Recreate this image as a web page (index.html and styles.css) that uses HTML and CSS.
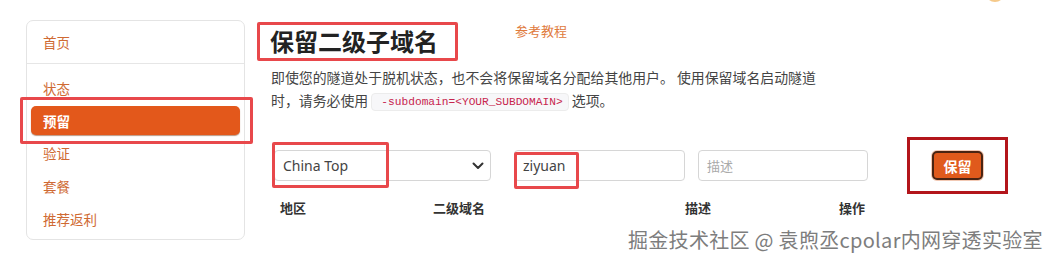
FILE: index.html
```html
<!DOCTYPE html>
<html lang="zh-CN">
<head>
<meta charset="utf-8">
<title>预留</title>
<link rel="stylesheet" href="styles.css">
</head>
<body>
<div class="page">
  <nav class="sidebar">
    <a class="nav-item home">首页</a>
    <div class="nav-list">
      <a class="nav-item">状态</a>
      <a class="nav-item active">预留</a>
      <a class="nav-item">验证</a>
      <a class="nav-item">套餐</a>
      <a class="nav-item">推荐返利</a>
    </div>
  </nav>
  <main class="main">
    <div class="title-row">
      <h1 class="title">保留二级子域名</h1>
      <a class="tutorial">参考教程</a>
    </div>
    <p class="desc">即使您的隧道处于脱机状态，也不会将保留域名分配给其他用户。 使用保留域名启动隧道<br>时，请务必使用 <code class="code">-subdomain=&lt;YOUR_SUBDOMAIN&gt;</code> 选项。</p>
    <div class="form-row">
      <div class="select">
        <span>China Top</span>
        <svg class="chev" width="12" height="8" viewBox="0 0 12 8"><path d="M1.5 1.5 L6 6 L10.5 1.5" fill="none" stroke="#333" stroke-width="2" stroke-linecap="round" stroke-linejoin="round"/></svg>
      </div>
      <div class="input">ziyuan</div>
      <div class="input desc-input placeholder">描述</div>
      <button class="btn">保留</button>
    </div>
    <div class="head-row">
      <span class="h h1">地区</span>
      <span class="h h2">二级域名</span>
      <span class="h h3">描述</span>
      <span class="h h4">操作</span>
    </div>
  </main>
</div>
<div class="mark mark-side"></div>
<div class="mark mark-title"></div>
<div class="mark mark-select"></div>
<div class="mark mark-input"></div>
<div class="mark mark-btn"></div>
<div class="blob"></div>
<div class="watermark">掘金技术社区 @ 袁煦丞cpolar内网穿透实验室</div>
</body>
</html>
```

FILE: styles.css
```css
html, body {
  margin: 0;
  padding: 0;
  background: #fff;
  width: 1050px;
  height: 266px;
  overflow: hidden;
  font-family: "Noto Sans", "Noto Sans CJK SC", sans-serif;
  position: relative;
}

.page {
  display: flex;
  align-items: flex-start;
}

.sidebar {
  margin: 20px 0 0 26px;
  width: 217px;
  height: 218px;
  border: 1px solid #e4e4e4;
  border-radius: 7px;
  display: flex;
  flex-direction: column;
  box-sizing: content-box;
}

.nav-item {
  display: flex;
  align-items: center;
  font-size: 13.5px;
  color: #cf6a33;
  padding-left: 16px;
  height: 33px;
  font-family: "Noto Sans CJK SC", sans-serif;
}

.home {
  height: 42px;
  border-bottom: 1px solid #e6e6e6;
}

.nav-list {
  display: flex;
  flex-direction: column;
  padding-top: 7px;
}

.nav-item.active {
  background: #e3581b;
  color: #fff;
  font-weight: 700;
  margin: 2px 4px 1px 4px;
  height: 29px;
  padding-left: 12px;
  border-radius: 5px;
  box-shadow: 0 1px 1px rgba(120, 50, 10, 0.5);
}

.main {
  margin-left: 25px;
  display: flex;
  flex-direction: column;
}

.title-row {
  display: flex;
  align-items: flex-start;
  padding-top: 23px;
}

.title {
  margin: 5px 0 0 0;
  font-size: 24px;
  line-height: 26px;
  font-weight: 700;
  color: #222;
  font-family: "Noto Sans CJK SC", sans-serif;
}

.tutorial {
  margin-left: 77px;
  font-size: 13px;
  line-height: 16px;
  color: #e07a3c;
  font-family: "Noto Sans CJK SC", sans-serif;
}

.desc {
  margin: 12px 0 0 1px;
  font-size: 13.9px;
  line-height: 23px;
  color: #444;
  font-family: "Noto Sans CJK SC", sans-serif;
}

.code {
  display: inline-block;
  font-family: "Liberation Mono", monospace;
  font-size: 11.2px;
  line-height: 16px;
  color: #c7254e;
  background: #f7f7f9;
  border: 1px solid #ececec;
  border-radius: 4px;
  padding: 0 5px 0 9px;
  vertical-align: 1px;
}

.form-row {
  display: flex;
  align-items: center;
  margin-top: 38px;
  margin-left: 4px;
}

.select, .input {
  box-sizing: border-box;
  height: 31px;
  border: 1px solid #d6d6d6;
  border-radius: 4px;
  display: flex;
  align-items: center;
  font-size: 14px;
  color: #444;
  background: #fff;
}

.select {
  width: 217px;
  padding: 0 6px 0 8px;
  justify-content: space-between;
}

.input {
  width: 171px;
  margin-left: 23px;
  padding-left: 8px;
}

.desc-input {
  margin-left: 13px;
  width: 170px;
}

.placeholder {
  color: #aaa;
  font-size: 13px;
  font-family: "Noto Sans CJK SC", sans-serif;
}

.btn {
  margin-left: 64px;
  width: 51px;
  height: 29px;
  background: #e05a1c;
  color: #fff;
  font-weight: 700;
  font-size: 14px;
  border: 2px solid #4a2412;
  border-radius: 5px;
  box-shadow: 0 0 0 1px #f2c9b4;
  font-family: "Noto Sans CJK SC", sans-serif;
  padding: 0;
}

.head-row {
  display: flex;
  margin-top: 18px;
  font-size: 13px;
  line-height: 18px;
  font-weight: 700;
  color: #333;
  font-family: "Noto Sans CJK SC", sans-serif;
}

.h1 { margin-left: 10px; }
.h2 { margin-left: 127px; }
.h3 { margin-left: 200px; }
.h4 { margin-left: 128px; }

.mark {
  position: absolute;
  border: 3px solid #e8484b;
  border-radius: 2px;
  box-sizing: border-box;
}

.mark-side { left: 20px; top: 97px; width: 233px; height: 47px; }
.mark-title { left: 257px; top: 22px; width: 201px; height: 39px; }
.mark-select { left: 272px; top: 142px; width: 117px; height: 46px; }
.mark-input { left: 514px; top: 152px; width: 65px; height: 37px; }
.mark-btn { left: 907px; top: 137px; width: 101px; height: 57px; border-color: #b3151b; border-radius: 0; }

.blob {
  position: absolute;
  left: 986px;
  top: -14px;
  width: 18px;
  height: 16px;
  border-radius: 50%;
  background: #f5c98a;
}

.watermark {
  position: absolute;
  left: 628px;
  top: 228px;
  font-size: 20px;
  letter-spacing: 0.3px;
  line-height: 24px;
  color: #7d7d7d;
  font-family: "Noto Sans CJK SC", sans-serif;
  text-shadow: 1px 1px 0 #fff, -1px -1px 0 #fff, 1px -1px 0 #fff, -1px 1px 0 #fff, 0 0 2px #fff;
  white-space: nowrap;
}
```
